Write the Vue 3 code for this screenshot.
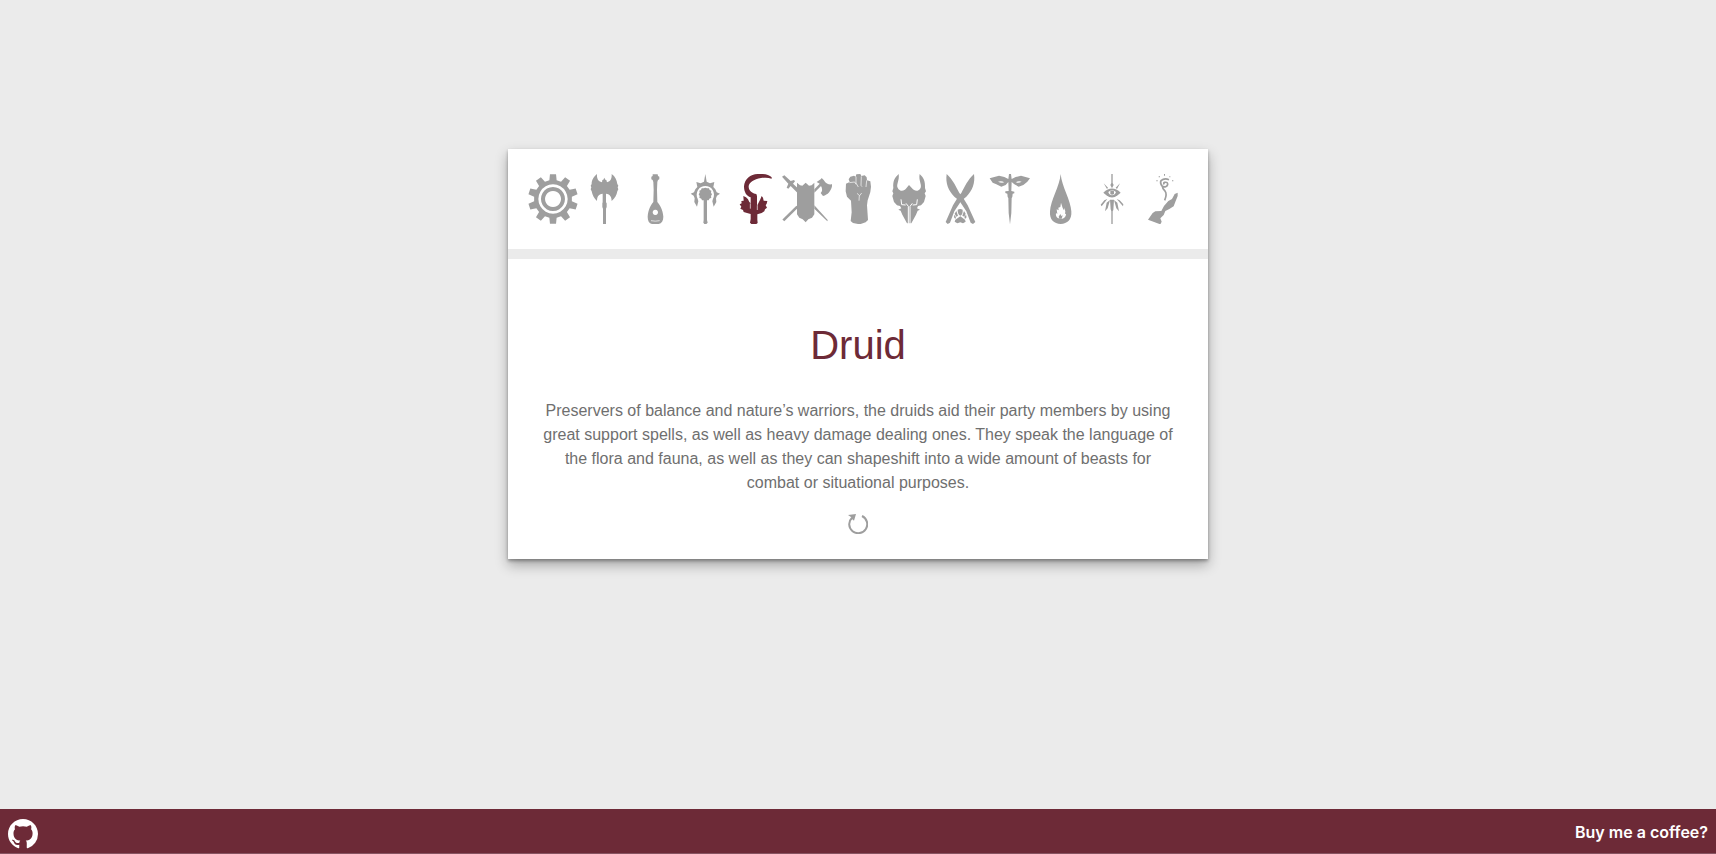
<script setup>
import { ref, computed } from 'vue'

const gear = (() => {
  const points = []
  for (let i = 0; i < 10; i++) {
    const offsets = [[-11, 57], [-7, 75], [7, 75], [11, 57]]
    for (const [angle, radius] of offsets) {
      const turn = ((i * 36 + angle) * Math.PI) / 180
      points.push(`${(75 + radius * Math.sin(turn)).toFixed(1)} ${(75 - radius * Math.cos(turn)).toFixed(1)}`)
    }
  }
  return `M${points.join('L')}Z`
})()

// Layer kinds: fill (solid), cut (card-coloured), line / thin / gap (strokes).
const classes = [
  { name: 'Settings', layers: [
    ['fill', gear],
    ['cut', 'M75 31a44 44 0 1 0 .1 0ZM75 39a36 36 0 1 1-.1 0Z'],
    ['cut', 'M75 51a24 24 0 1 0 .1 0Z'],
  ] },
  { name: 'Barbarian', layers: [
    ['fill', 'M54 0C42 9 38 21 38 30L35 35L37 40L35 46L38 52C40 64 46 74 54 81C54 69 58 60 71 59V85L70 88V99L72 104V150H81V104L83 99V88L81 85V59C94 60 98 70 98 81C108 73 113 64 115 52L118 46L116 40L118 35L115 30C113 18 109 8 98 0C99 13 95 22 84 25L82 18L79 17L76 11L73 17L70 18L69 25C57 22 53 13 54 0Z'],
  ] },
  { name: 'Bard', layers: [
    ['fill', 'M68 1H83L84 6L88 8V16L84 18L82 24L81 48L82 84C88 90 99 108 100 128C100 140 95 148 86 150H66C57 148 53 140 53 128C54 108 64 90 70 84L71 48L70 24L68 18L64 16V8L68 6Z'],
    ['cut', 'M76 107a8 8 0 1 0 .1 0Z'],
    ['thin', 'M63 140Q76 143 89 140'],
  ] },
  { name: 'Cleric', layers: [
    ['fill', 'M51 98L43 84L44 73L41 65L32 59L42 55L46 46L52 39L49 24L62 28L72 23L76 0L80 23L90 28L103 24L100 39L106 46L110 55L120 59L111 65L108 73L109 84L101 98L97 82L99 74A26 26 0 1 0 53 74L55 82Z'],
    ['fill', 'M71 43L76 41L81 43L87 43L89 48L94 50L93 56L96 61L93 66L94 71L88 74L86 79L81 79V138L83 146L79 150H73L70 146L71 138V79L66 79L64 74L58 71L59 66L56 61L59 56L58 50L63 48L65 43Z'],
  ] },
  { name: 'Druid', layers: [
    ['fill', 'M122 14C111 10 100 11 90 12C68 16 52 27 53 39C54 51 64 58 76 60L78 66V96L82 88L88 76L92 66L96 71L98 80L109 81L107 89L104 94L108 101L102 106L100 112L92 117L79 121V137L80 147L76 150H61L57 146L59 135V120L48 117L38 114L36 108L28 104L31 98L26 91L32 88L31 81L38 80L37 66L45 70L51 76L55 84L59 88V70C46 66 39 54 39 37C41 15 58 1 80 0C98 -1 114 1 122 10Z'],
    ['thin', 'M58 88V104M79 94V108'],
  ] },
  { name: 'Fighter', layers: [
    ['fill', 'M45 26L54 34L61 35L71 26L81 35L89 34L97 26V121L90 131L79 136L71 145L62 136L52 131L45 121Z'],
    ['fill', 'M0 8L7 4L26 21L36 18L39 22L33 29L46 41V56L26 36L19 44L14 41L19 29Z'],
    ['line', 'M4 139L46 98'],
    ['fill', 'M97 94L137 138L136 142L97 104ZM97 46L113 29L104 24L117 15L119 12L125 18C133 32 142 32 151 31C149 48 140 62 123 66L116 57C122 52 121 43 117 36L97 56Z'],
  ] },
  { name: 'Monk', layers: [
    ['fill', 'M39 29L50 24L47 16L52 8L63 5L68 8L70 1L82 0L85 6L95 4L101 10L102 19L112 22L114 38L112 54L108 67L104 79L102 94L105 138L98 145L80 151L60 147L53 141L56 115L54 80L42 68L38 52Z'],
    ['gap', 'M49 26L65 24L69 31M69 8V27L76 39M85 7L84 34L87 38M101 19L99 39M72 58L80 65L86 57M79 65L78 80'],
  ] },
  { name: 'Warlock', layers: [
    ['fill', 'M44 0C47 20 36 31 41 41C47 54 61 52 67 43L75 33L84 43C91 52 104 54 110 41C114 31 103 20 107 0C119 11 124 22 123 42L126 52L122 58L125 66L120 84L111 94L102 96L99 103L108 107L101 110L96 122L82 148H69L55 122L50 110L43 107L52 103L48 96L39 94L30 84L25 66L28 58L25 52L28 42C26 22 32 11 44 0Z'],
    ['slit', 'M51 76L53 92L65 93M100 76L98 92L86 93M66 88L73 97V150M85 88L78 97V150'],
  ] },
  { name: 'Ranger', layers: [
    ['fill', 'M35 0C54 18 63 38 73 57L81 66L98 94L121 144L114 150L107 146L94 112L73 80L58 68C40 49 31 28 35 0Z'],
    ['gap', 'M66 84L84 62'],
    ['fill', 'M117 0C98 18 89 38 79 57L71 66L54 94L32 144L38 150L45 146L58 112L79 80L94 68C112 49 121 28 117 0Z'],
    ['fill', 'M68 107Q76 103 83 107Q84 122 76 125Q68 122 68 107ZM64 111L69 125L64 128L59 119ZM87 111L92 119L88 128L82 125ZM58 122Q65 129 62 134Q55 132 58 122ZM93 122Q97 132 90 134Q86 129 93 122ZM76 127L90 137L92 143L84 148L76 145L67 148L59 143L61 137Z'],
  ] },
  { name: 'Rogue', layers: [
    ['fill', 'M14 13L42 5L58 9L70 15L72 0H78L80 15L92 9L108 5L135 13L127 23L115 33L101 38L88 31L80 24L79 51L88 53V58L83 59L82 69L80 72L79 117L75 151L71 117L70 72L68 69L67 59L61 57V52L71 51L70 24L62 33L49 38L34 31L23 26Z'],
    ['cut', 'M39 23Q49 19 58 25Q49 28 39 23ZM110 23Q101 19 92 25Q101 28 110 23Z'],
  ] },
  { name: 'Sorcerer', layers: [
    ['fill', 'M74 0C77 37 105 80 106 112C108 137 94 150 74 150C54 150 40 137 42 112C43 80 71 37 74 0Z'],
    ['cut', 'M75 86L80 102L84 109L84 101L88 112L87 120L90 119C90 130 82 135 74 134C65 134 58 129 60 117L64 120L62 106L68 109L67 101L73 99Z'],
    ['fill', 'M73 120L76 126L80 124L77 134H70L68 128Z'],
  ] },
  { name: 'Wizard', layers: [
    ['fill', 'M73 0H77V27L80 33L75 43L70 33L73 27ZM50 28L63 41L60 45ZM99 28L90 45L86 41ZM69 77H81L79 108L77 112V150H73V112L71 106Z'],
    ['fill', 'M49 56Q75 31 101 56L92 64Q75 77 58 64Z'],
    ['cut', 'M64 54Q75 44 87 54Q83 64 75 64Q66 63 64 54Z'],
    ['fill', 'M70 51Q75 48 81 52V60Q75 65 70 60Z'],
    ['fill', 'M61 75L44 97L41 92L52 79ZM89 75L108 97L109 91L98 79ZM69 78L62 103L54 112L59 86ZM81 78L88 103L96 112L91 86Z'],
  ] },
  { name: 'Mage', layers: [
    ['fill', 'M119 56V66L113 81L107 97L94 105L82 111L77 123L67 133L71 143L67 151L30 137L44 117L52 112L70 111L78 96L91 81L102 75L110 60Z'],
    ['swirl', 'M79 31Q75 27 80 25Q90 23 89 32Q85 42 73 37Q65 28 69 20Q79 11 93 17M73 37Q73 45 81 51Q88 60 80 79'],
    ['fill', 'M55 19H59V22H55ZM62 7H66V10H62ZM78 0H81V5H78ZM94 7H97V10H94ZM102 19H106V22H102Z'],
  ] },
]

const descriptions = {
  Druid: 'Preservers of balance and nature’s warriors, the druids aid their party members by using great support spells, as well as heavy damage dealing ones. They speak the language of the flora and fauna, as well as they can shapeshift into a wide amount of beasts for combat or situational purposes.',
}

const selected = ref('Druid')
const description = computed(() => descriptions[selected.value] ?? '')
</script>

<template>
  <div class="page">
    <main class="stage">
      <section class="card">
        <nav class="picker" aria-label="Classes">
          <button
            v-for="item in classes"
            :key="item.name"
            type="button"
            class="pick"
            :class="{ active: item.name === selected }"
            :aria-label="item.name"
            :aria-pressed="item.name === selected"
            @click="selected = item.name"
          >
            <svg viewBox="0 0 150 150" aria-hidden="true">
              <path v-for="([kind, d], i) in item.layers" :key="i" :class="kind" :d="d" fill-rule="evenodd" />
            </svg>
          </button>
        </nav>
        <div class="details">
          <h1>{{ selected }}</h1>
          <p>{{ description }}</p>
          <button type="button" class="reset" aria-label="Reset" @click="selected = 'Druid'">
            <svg viewBox="0 0 60 60" aria-hidden="true">
              <path class="ring" d="M42 6A27 27 0 1 1 12 11" />
              <path d="M0 3L24 0L18 20L13 16L8 17L10 10Z" />
            </svg>
          </button>
        </div>
      </section>
    </main>
    <footer class="footer">
      <a href="#" class="github" aria-label="GitHub">
        <svg viewBox="0 0 16 16" aria-hidden="true">
          <path d="M8 0C3.58 0 0 3.58 0 8c0 3.54 2.29 6.53 5.47 7.59.4.07.55-.17.55-.38 0-.19-.01-.82-.01-1.49-2.01.37-2.53-.49-2.69-.94-.09-.23-.48-.94-.82-1.13-.28-.15-.68-.52-.01-.53.63-.01 1.08.58 1.23.82.72 1.21 1.87.87 2.33.66.07-.52.28-.87.51-1.07-1.78-.2-3.64-.89-3.64-3.95 0-.87.31-1.59.82-2.15-.08-.2-.36-1.02.08-2.12 0 0 .67-.21 2.2.82.64-.18 1.32-.27 2-.27s1.36.09 2 .27c1.53-1.04 2.2-.82 2.2-.82.44 1.1.16 1.92.08 2.12.51.56.82 1.27.82 2.15 0 3.07-1.87 3.75-3.65 3.95.29.25.54.73.54 1.48 0 1.07-.01 1.93-.01 2.2 0 .21.15.46.55.38A8.01 8.01 0 0 0 16 8c0-4.42-3.58-8-8-8Z" />
        </svg>
      </a>
      <a href="#" class="coffee">Buy me a coffee?</a>
    </footer>
  </div>
</template>

<style>
body {
  background: #ebebeb;
}
</style>

<style scoped>
.page {
  display: flex;
  flex-direction: column;
  min-height: 100vh;
  font-family: "Liberation Sans", Arial, sans-serif;
}

.stage {
  flex: 1;
  display: flex;
  justify-content: center;
  align-items: flex-start;
  padding: 149px 16px 40px;
}

.card {
  width: 100%;
  max-width: 700px;
  background: #fff;
  box-shadow: 0 2px 3px rgba(0, 0, 0, 0.3), 0 6px 12px rgba(0, 0, 0, 0.3);
}

.picker {
  display: flex;
  justify-content: space-between;
  padding: 25px 20px;
  border-bottom: 10px solid #ebebeb;
}

button {
  padding: 0;
  border: 0;
  background: none;
  color: #9e9e9e;
  cursor: pointer;
}

svg {
  display: block;
  width: 100%;
  height: auto;
  fill: currentColor;
}

.pick {
  width: 50px;
}

.pick.active {
  color: #6d2a37;
}

.cut {
  fill: #fff;
}

.line,
.thin,
.gap,
.slit,
.swirl,
.ring {
  fill: none;
  stroke: currentColor;
  stroke-width: 8;
}

.thin,
.gap,
.slit {
  stroke: #fff;
  stroke-width: 2;
}

.slit {
  stroke-width: 3;
}

.swirl {
  stroke-width: 5;
}

.ring {
  stroke-width: 6;
}

.details {
  display: flex;
  flex-direction: column;
  align-items: center;
  padding: 62px 32px 25px;
  text-align: center;
}

h1 {
  margin: 0 0 30px;
  color: #6d2a37;
  font-size: 40px;
  font-weight: 400;
  line-height: 48px;
}

p {
  margin: 0 0 19px;
  color: #6f6f6f;
  font-size: 16px;
  line-height: 24px;
}

.reset {
  width: 20px;
}

.footer {
  display: flex;
  justify-content: space-between;
  align-items: flex-start;
  padding: 10px 8px 4px;
  border-bottom: 1px solid #875461;
  background: #6d2a37;
}

.github {
  width: 30px;
  color: #fff;
}

.coffee {
  color: #fff;
  font-family: Inter, sans-serif;
  font-size: 16px;
  font-weight: 600;
  line-height: 26px;
  text-decoration: none;
}
</style>
